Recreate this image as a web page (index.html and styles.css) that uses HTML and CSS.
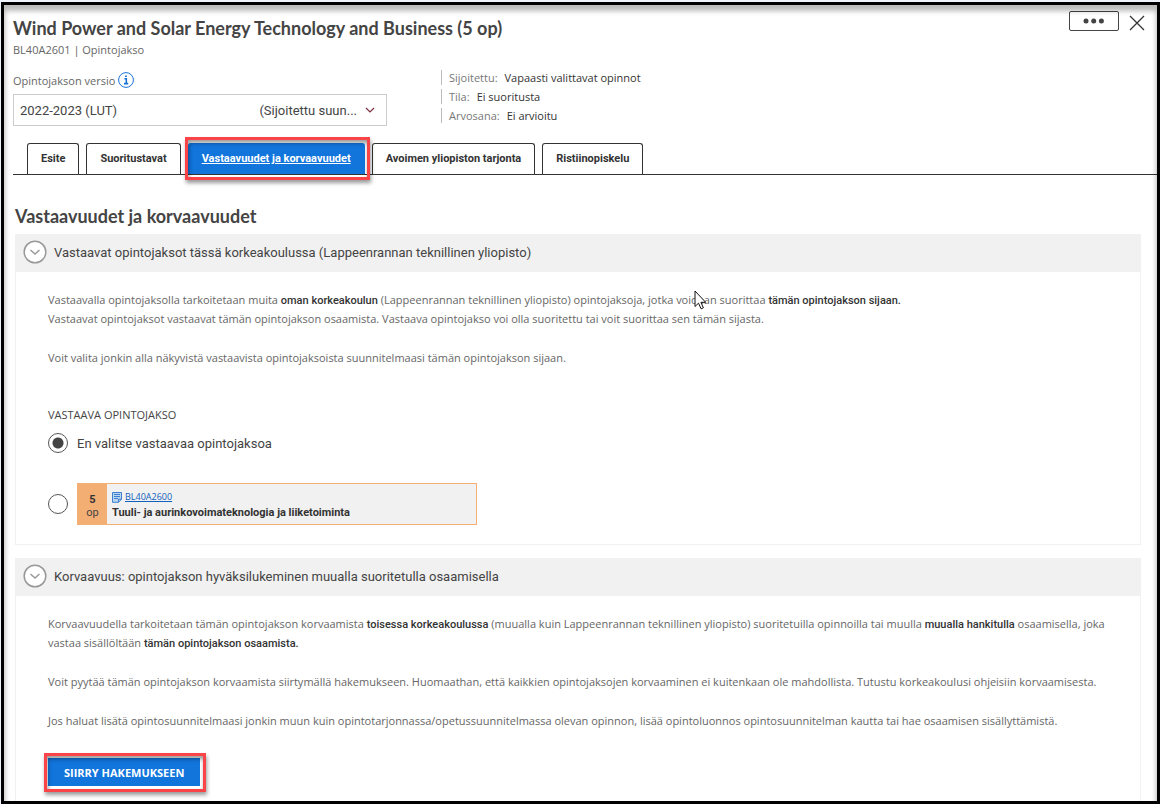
FILE: index.html
```html
<!DOCTYPE html>
<html lang="fi">
<head>
    <meta charset="UTF-8">
    <meta name="viewport" content="width=device-width, initial-scale=1.0">
    <title>Wind Power and Solar Energy Technology and Business (5 op)</title>
    <link rel="stylesheet" href="styles.css">
</head>
<body>
    <main class="modal">
        <header class="modal-header">
            <div class="title-row">
                <div>
                    <h1>Wind Power and Solar Energy Technology and Business (5 op)</h1>
                    <p class="course-code">BL40A2601 | Opintojakso</p>
                </div>
                <div class="actions">
                    <button type="button" class="more-btn" aria-label="Lisää toimintoja">
                        <svg width="22" height="6" viewBox="0 0 22 6"><circle cx="3" cy="3" r="2.5"/><circle cx="10.7" cy="3" r="2.5"/><circle cx="18.4" cy="3" r="2.5"/></svg>
                    </button>
                    <button type="button" class="close-btn" aria-label="Sulje">
                        <svg width="16" height="16" viewBox="0 0 16 16"><path d="M1 1l14 14M15 1L1 15"/></svg>
                    </button>
                </div>
            </div>
            <div class="info-row">
                <div class="version">
                    <div class="version-label">
                        <label for="version">Opintojakson versio</label>
                        <button type="button" class="info-btn" aria-label="Lisätietoja">
                            <svg width="16" height="16" viewBox="0 0 16 16"><circle cx="8" cy="8" r="7.4"/><path class="i" d="M6.4 6.8h1.900v4.600M6 11.600h4.200M7.100 4.200h1.800"/></svg>
                        </button>
                    </div>
                    <div class="version-select">
                        <select id="version">
                            <option>2022-2023 (LUT)</option>
                        </select>
                        <span class="version-status">(Sijoitettu suun...</span>
                        <svg class="version-arrow" width="10" height="6" viewBox="0 0 10 6"><path d="M1 1l4 4 4-4"/></svg>
                    </div>
                </div>
                <dl class="facts">
                    <div><dt>Sijoitettu:</dt><dd>Vapaasti valittavat opinnot</dd></div>
                    <div><dt>Tila:</dt><dd>Ei suoritusta</dd></div>
                    <div><dt>Arvosana:</dt><dd>Ei arvioitu</dd></div>
                </dl>
            </div>
        </header>

        <nav class="tabs">
            <a class="tab" href="#">Esite</a>
            <a class="tab" href="#">Suoritustavat</a>
            <a class="tab active marked" href="#">Vastaavuudet ja korvaavuudet</a>
            <a class="tab" href="#">Avoimen yliopiston tarjonta</a>
            <a class="tab" href="#">Ristiinopiskelu</a>
        </nav>

        <div class="content">
            <h2>Vastaavuudet ja korvaavuudet</h2>

            <section class="panel">
                <h3 class="panel-header">
                    <button type="button" class="toggle" aria-expanded="true">
                        <svg width="24" height="24" viewBox="0 0 24 24"><circle cx="12" cy="12" r="10.8"/><path d="M7.5 10l4.5 4 4.5-4"/></svg>
                        Vastaavat opintojaksot tässä korkeakoulussa (Lappeenrannan teknillinen yliopisto)
                    </button>
                </h3>
                <div class="panel-body">
                    <p>Vastaavalla opintojaksolla tarkoitetaan muita <b>oman korkeakoulun</b> (Lappeenrannan teknillinen yliopisto) opintojaksoja, jotka voidaan suorittaa <b>tämän opintojakson sijaan.</b><br>
                    Vastaavat opintojaksot vastaavat tämän opintojakson osaamista. Vastaava opintojakso voi olla suoritettu tai voit suorittaa sen tämän sijasta.</p>
                    <p>Voit valita jonkin alla näkyvistä vastaavista opintojaksoista suunnitelmaasi tämän opintojakson sijaan.</p>

                    <fieldset class="choices">
                        <legend>VASTAAVA OPINTOJAKSO</legend>
                        <div class="choice">
                            <input type="radio" name="vastaava" id="none" checked>
                            <label for="none">En valitse vastaavaa opintojaksoa</label>
                        </div>
                        <div class="choice">
                            <input type="radio" name="vastaava" id="bl40a2600" aria-labelledby="course-name">
                            <div class="course">
                                <div class="credits"><b>5</b><span>op</span></div>
                                <div class="course-info">
                                    <a class="course-link" href="#">
                                        <svg width="10" height="11" viewBox="0 0 10 11"><path class="sheet" d="M.5 .5h9v6.800l-3 3h-6z"/><path d="M2 2.500h6M2 4.500h6M2 6.500h4M6.500 10.200v-3h3"/></svg>
                                        <span>BL40A2600</span>
                                    </a>
                                    <label for="bl40a2600" id="course-name">Tuuli- ja aurinkovoimateknologia ja liiketoiminta</label>
                                </div>
                            </div>
                        </div>
                    </fieldset>
                </div>
            </section>

            <section class="panel">
                <h3 class="panel-header">
                    <button type="button" class="toggle" aria-expanded="true">
                        <svg width="24" height="24" viewBox="0 0 24 24"><circle cx="12" cy="12" r="10.8"/><path d="M7.5 10l4.5 4 4.5-4"/></svg>
                        Korvaavuus: opintojakson hyväksilukeminen muualla suoritetulla osaamisella
                    </button>
                </h3>
                <div class="panel-body">
                    <p>Korvaavuudella tarkoitetaan tämän opintojakson korvaamista <b>toisessa korkeakoulussa</b> (muualla kuin Lappeenrannan teknillinen yliopisto) suoritetuilla opinnoilla tai muulla <b>muualla hankitulla</b> osaamisella, joka vastaa sisällöltään <b>tämän opintojakson osaamista.</b></p>
                    <p>Voit pyytää tämän opintojakson korvaamista siirtymällä hakemukseen. Huomaathan, että kaikkien opintojaksojen korvaaminen ei kuitenkaan ole mahdollista. Tutustu korkeakoulusi ohjeisiin korvaamisesta.</p>
                    <p>Jos haluat lisätä opintosuunnitelmaasi jonkin muun kuin opintotarjonnassa/opetussuunnitelmassa olevan opinnon, lisää opintoluonnos opintosuunnitelman kautta tai hae osaamisen sisällyttämistä.</p>
                    <button type="button" class="submit-btn marked">SIIRRY HAKEMUKSEEN</button>
                </div>
            </section>
        </div>
    </main>

    <svg class="cursor" width="13" height="20" viewBox="0 0 13 20"><path d="M1 1v15.500l3.500-3.300 2.600 5.600 2.300-1-2.500-5.500h4.800z"/></svg>
</body>
</html>
```
FILE: styles.css
```css
* {
    box-sizing: border-box;
}
body {
    margin: 0;
    height: 100vh;
    padding: 2px 0 0 1px;
    overflow: hidden;
    background-color: #eef2fb;
    color: #444;
    font-family: "Open Sans", sans-serif;
    font-size: 11px;
    line-height: 19px;
}
h1, h2, h3, p, dl, dd {
    margin: 0;
}
button, select {
    font: inherit;
    color: inherit;
    background: none;
    border: 0;
    padding: 0;
}
svg {
    display: block;
    fill: none;
}
b {
    color: #333;
    font-family: Roboto, sans-serif;
    font-weight: 500;
    line-height: 13px;
}

/* Modal */
.modal {
    position: relative;
    height: 100%;
    overflow: hidden;
    border: 3px solid #000;
    background: white;
}
.modal::after {
    content: "";
    position: absolute;
    inset: 0;
    box-shadow: inset 0 5px 5px 1px rgba(0, 0, 0, 0.27);
    pointer-events: none;
}
.modal-header {
    padding: 4px 12px 0 9px;
}
.title-row {
    display: flex;
    justify-content: space-between;
}
h1, h2 {
    font-family: Lato, sans-serif;
    font-size: 18px;
    line-height: 24px;
    font-weight: 700;
}
h1 {
    margin-top: 7px;
}
.course-code {
    color: #666;
    line-height: 20px;
}
.actions {
    display: flex;
    align-items: flex-start;
    gap: 10px;
    padding-top: 2px;
}
.more-btn {
    display: flex;
    align-items: center;
    justify-content: center;
    width: 50px;
    height: 20px;
    border: 1px solid #444;
    border-radius: 2px;
}
.more-btn svg {
    fill: #444;
}
.close-btn {
    margin-top: 4px;
}
.close-btn svg {
    stroke: #333;
    stroke-width: 1.3;
}

/* Version and status */
.info-row {
    display: flex;
    gap: 54px;
    margin-top: 10px;
}
.version {
    width: 374px;
}
.version-label {
    display: flex;
    align-items: center;
    gap: 3px;
    height: 20px;
    margin-bottom: 4px;
    color: #666;
}
.info-btn svg {
    stroke: #1a73d9;
}
.info-btn .i {
    stroke-width: 1.6;
}
.version-select {
    display: grid;
    grid-template-columns: 1fr auto 10px;
    gap: 8px;
    align-items: center;
    height: 32px;
    padding-right: 11px;
    border: 1px solid #ccc;
    font-family: Roboto, sans-serif;
    font-size: 13px;
}
.version-select select {
    grid-area: 1 / 1 / 2 / 4;
    height: 30px;
    padding-left: 6px;
    appearance: none;
}
.version-status {
    grid-area: 1 / 2;
    pointer-events: none;
}
.version-arrow {
    grid-area: 1 / 3;
    stroke: #7c3040;
    stroke-width: 1.2;
    pointer-events: none;
}
.facts {
    display: grid;
    gap: 4px;
    align-content: start;
}
.facts div {
    display: flex;
    gap: 7px;
    padding-left: 7px;
    border-left: 1px solid #bbb;
    line-height: 15px;
}
.facts dt {
    color: #777;
}
.facts dd {
    color: #333;
}

/* Tabs */
.tabs {
    display: flex;
    gap: 7px;
    margin: 17px 0 0 9px;
    padding-left: 14px;
    border-bottom: 1px solid #333;
}
.tab {
    padding: 0 13px;
    border: 1px solid #333;
    border-bottom: 0;
    border-radius: 3px 3px 0 0;
    color: #333;
    font-family: Roboto, sans-serif;
    font-weight: 700;
    line-height: 30px;
    text-decoration: none;
}
.tab.active {
    border-color: #1175dc;
    background: #1175dc;
    color: white;
    text-decoration: underline;
}

/* Red frame round the highlighted controls */
.marked {
    position: relative;
}
.marked::after {
    content: "";
    position: absolute;
    inset: -7px -6px -6px -4px;
    border: 3px solid #fb4448;
    box-shadow: 1px 3px 4px rgba(0, 0, 0, 0.4), inset 1px 3px 4px rgba(0, 0, 0, 0.4);
}
.submit-btn.marked::after {
    top: -5px;
}

/* Content */
.content {
    padding: 29px 16px 0 11px;
}
h2 {
    margin-bottom: 6px;
}
.panel {
    margin-bottom: 13px;
    border: 1px solid #f1f1f1;
}
.panel-header {
    background: #f1f1f1;
    font-weight: 400;
}
.toggle {
    display: flex;
    align-items: center;
    gap: 7px;
    width: 100%;
    height: 37px;
    padding: 0 0 3px 7px;
    font-family: Roboto, sans-serif;
    font-size: 13px;
}
.toggle svg {
    stroke: #999;
    stroke-width: 1.5;
}
.toggle circle {
    fill: white;
}
.panel-body {
    padding: 18px 12px 19px 32px;
    color: #666;
}
.panel-body p {
    margin-bottom: 20px;
}
.choices {
    margin: 0;
    padding: 0;
    border: 0;
    color: #444;
}
.choices legend {
    padding: 18px 0 9px;
}
.choice {
    display: flex;
    align-items: center;
    gap: 9px;
    font-family: Roboto, sans-serif;
    font-size: 13px;
}
.choice + .choice {
    margin-top: 30px;
}
.choice input {
    appearance: none;
    width: 20px;
    height: 20px;
    margin: 0;
    border: 1px solid #555;
    border-radius: 50%;
    background: white;
}
.choice input:checked {
    background: radial-gradient(circle, #444 5px, white 6px);
}
.course {
    display: flex;
    width: 400px;
    height: 42px;
    border: 1px solid #f3ae74;
    background: #f1f1f1;
    font-size: 11px;
}
.credits {
    display: grid;
    align-content: center;
    width: 29px;
    padding-top: 4px;
    background: #f3ae74;
    text-align: center;
    line-height: 13px;
}
.credits b {
    font-weight: 700;
}
.course-info {
    padding: 5px;
}
.course-info label {
    display: block;
    color: #333;
    font-weight: 700;
    line-height: 16px;
}
.course-link {
    display: flex;
    align-items: center;
    gap: 3px;
    color: #0f61bd;
    font-family: "Open Sans", sans-serif;
    font-size: 9px;
    line-height: 16px;
    text-decoration: none;
}
.course-link span {
    text-decoration: underline;
}
.course-link svg {
    stroke: #3b7fd0;
}
.course-link .sheet {
    fill: #bcd5f1;
}
.submit-btn {
    height: 28px;
    margin-top: 8px;
    padding: 0 16px;
    background: #1175dc;
    color: white;
    font-weight: 700;
}

.cursor {
    position: absolute;
    left: 694px;
    top: 290px;
    fill: white;
    stroke: #111;
}
```
